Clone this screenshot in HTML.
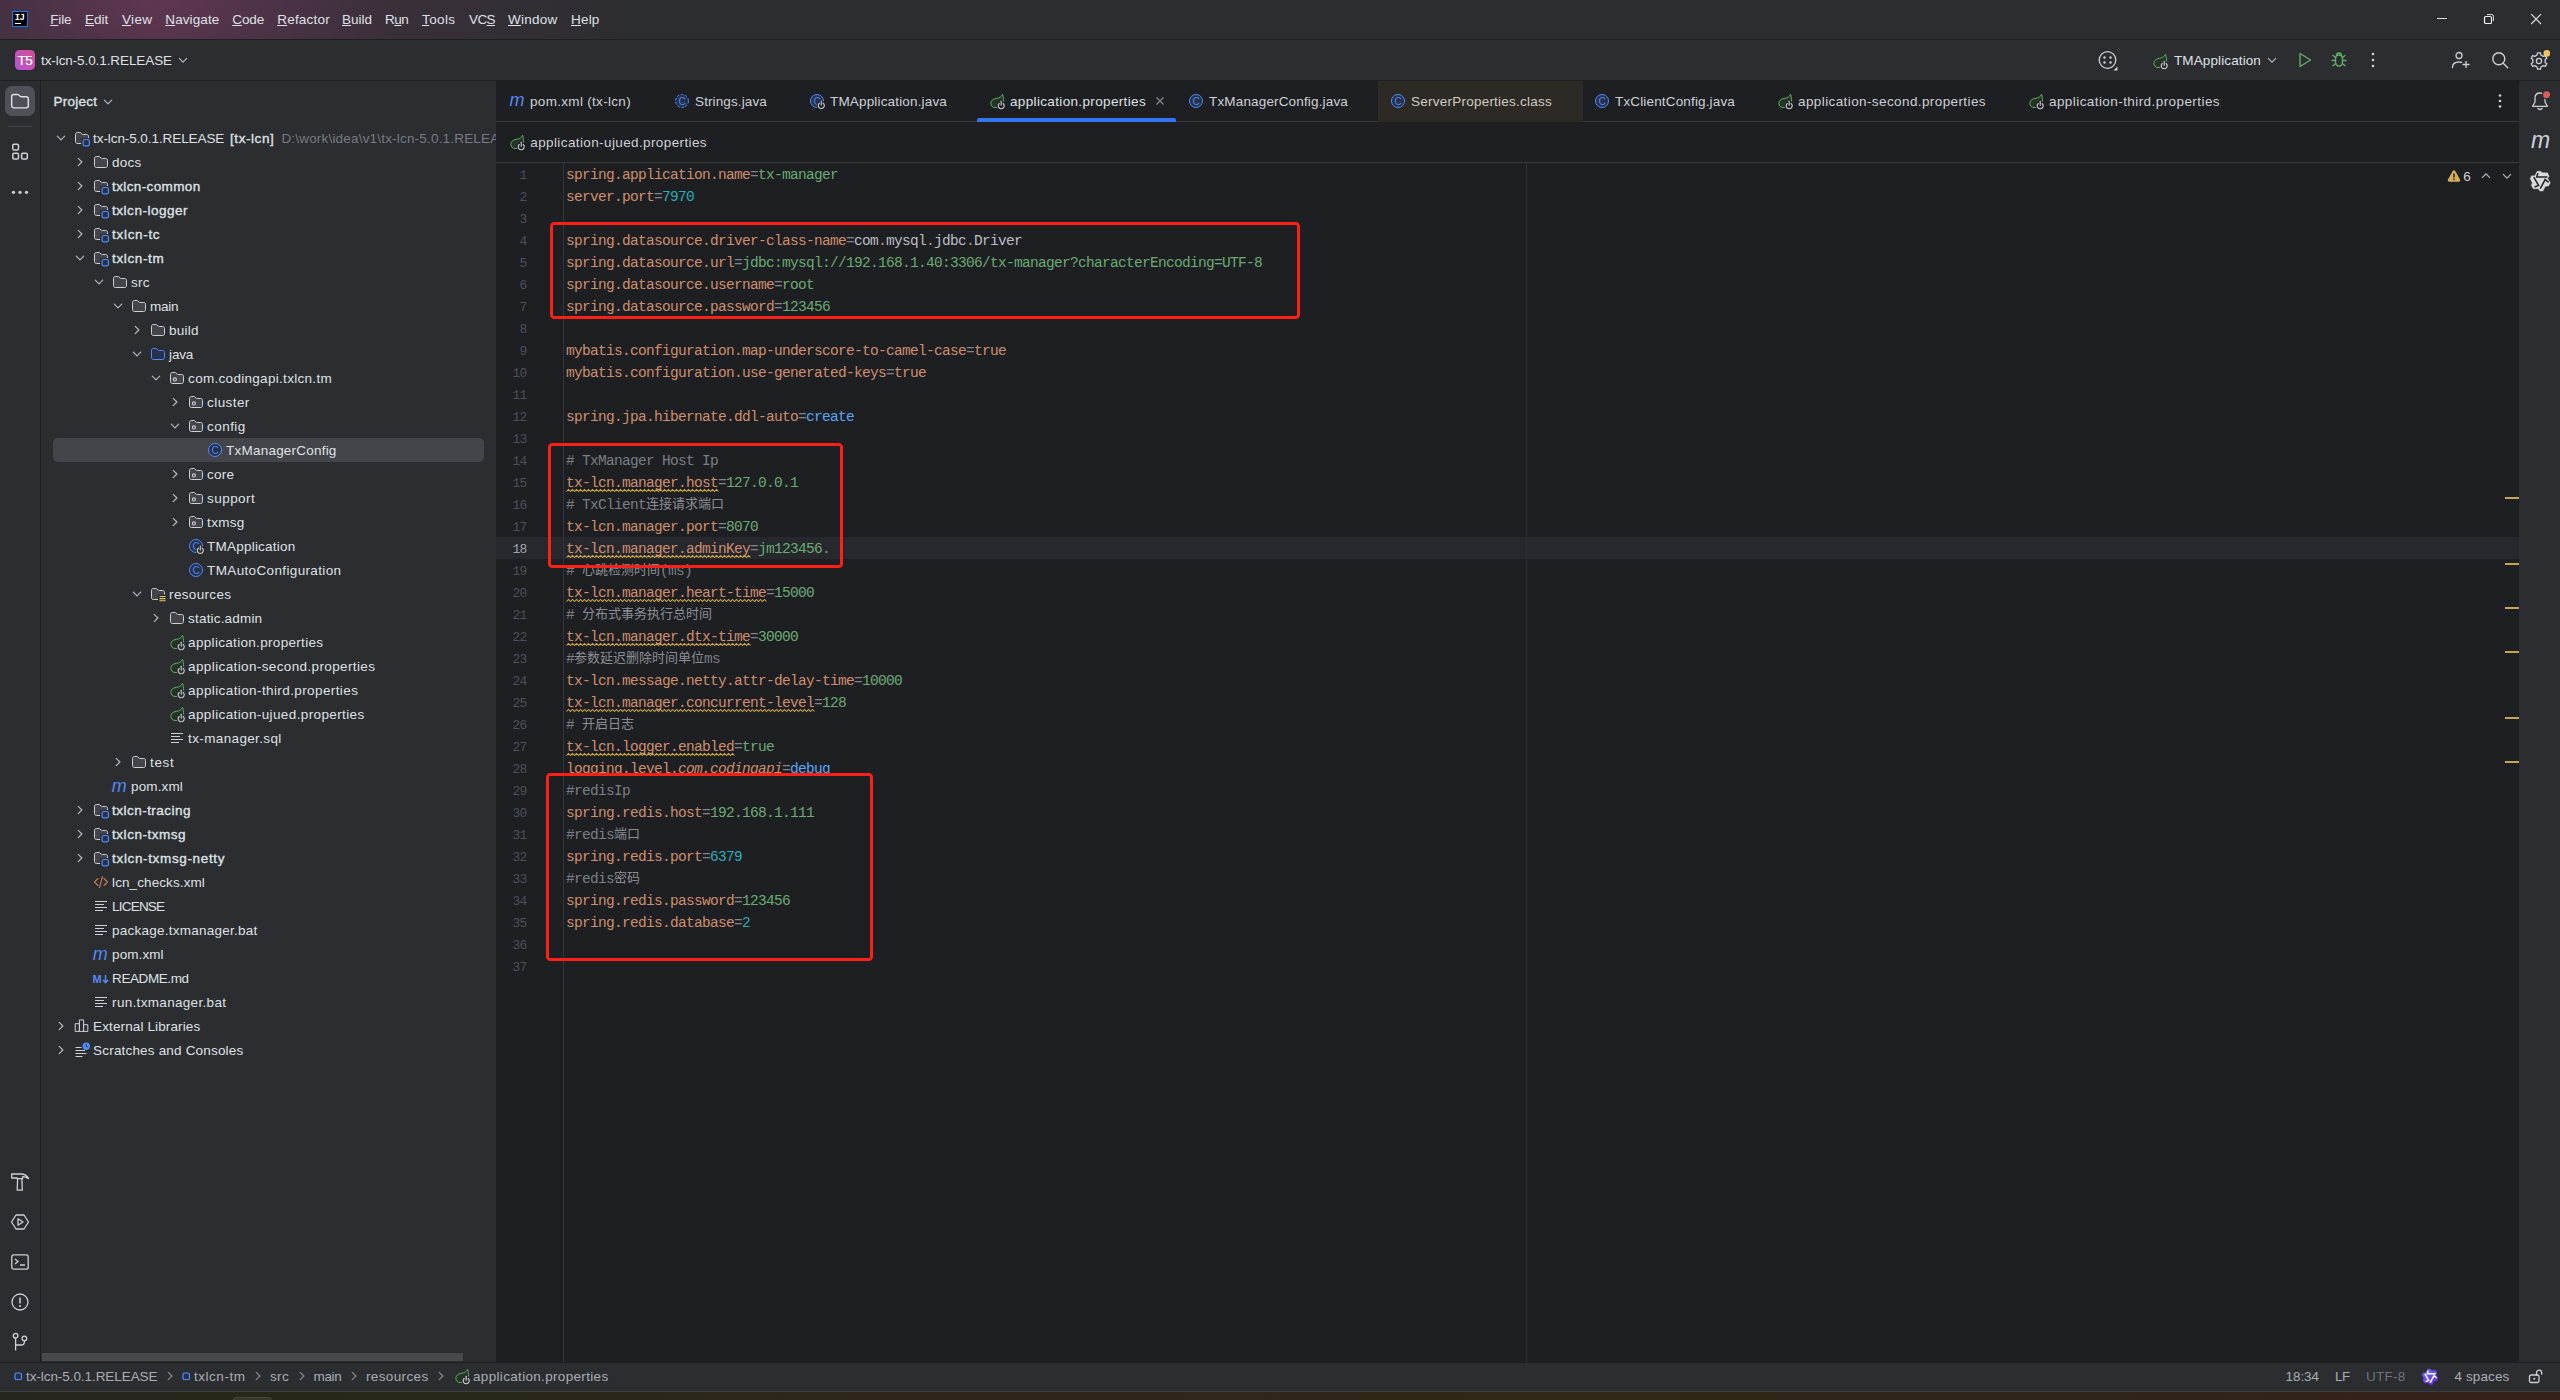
<!DOCTYPE html>
<html lang="en"><head><meta charset="utf-8"><title>tx-lcn-5.0.1.RELEASE – application.properties</title>
<style>
html,body{margin:0;padding:0;background:#2b2d30;}
body{width:2560px;height:1400px;overflow:hidden;}
#app{position:relative;width:2560px;height:1400px;overflow:hidden;background:#2b2d30;font-family:'Liberation Sans','Noto Sans CJK SC',sans-serif;}
#app>div,#app>svg,#app>span{position:absolute;}
.t{line-height:20px;white-space:pre;}
.code{position:absolute;left:566px;height:22px;line-height:22px;white-space:pre;font-family:'Liberation Mono','Noto Sans CJK SC',monospace;font-size:14.5px;letter-spacing:-0.702px;color:#bcbec4;}
.code i{position:relative;top:-1.2px;font-style:normal;font-family:'Liberation Mono','Noto Sans CJK SC',monospace;font-size:13px;letter-spacing:0;}
.k{color:#cf8e6d}.e{color:#81858c}.v{color:#6aab73}.n{color:#2aacb8}.b{color:#56a8f5}.c{color:#7a7e85}.c i{color:#8b8e95}.w{color:#bcbec4}
.ln{position:absolute;left:497px;width:29.8px;text-align:right;height:22px;line-height:23.4px;font-family:'Liberation Mono',monospace;font-size:13px;letter-spacing:-0.6px;color:#4b5059;}

</style></head><body><div id="app">
<div style="left:0px;top:0px;width:1100px;height:39px;background:radial-gradient(ellipse 520px 340px at 158px -4px,rgba(96,54,83,1) 0%,rgba(96,54,83,.5) 30%,rgba(96,54,83,.28) 45%,rgba(96,54,83,.05) 86%,rgba(96,54,83,0) 100%);"></div>
<div style="left:0px;top:39px;width:2560px;height:1px;background:#1e1f22;"></div>
<div style="left:0px;top:80px;width:2560px;height:1px;background:#1e1f22;"></div>
<div style="left:40px;top:81px;width:1px;height:1281px;background:#1e1f22;"></div>
<div style="left:496px;top:81px;width:2023px;height:1281px;background:#1e1f22;"></div>
<div style="left:496px;top:121px;width:2023px;height:1px;background:#393b40;"></div>
<div style="left:496px;top:162px;width:2023px;height:1px;background:#393b40;"></div>
<div style="left:496px;top:537px;width:2023px;height:22px;background:#26282e;"></div>
<div style="left:563px;top:163px;width:1px;height:1199px;background:#313438;"></div>
<div style="left:1526px;top:163px;width:1px;height:1199px;background:#2f3135;"></div>
<div style="left:0px;top:1362px;width:2560px;height:1px;background:#1e1f22;"></div>
<div style="left:0px;top:1392px;width:2560px;height:8px;background:linear-gradient(90deg,#25271a 0%,#2a2719 25%,#30251a 40%,#2f2718 62%,#30241a 86%,#36201a 100%);"></div>
<div style="left:0px;top:1391px;width:2560px;height:1px;background:#3c3e41;"></div>
<div style="left:233px;top:1397px;width:39px;height:6px;background:#37372a;border-radius:3px 3px 0 0;border:1px solid #45463a;box-sizing:border-box;"></div>
<div style="left:42px;top:1353px;width:421px;height:8px;background:#47494d;"></div>
<div style="left:12px;top:11px;width:16px;height:16px;background:#000;box-sizing:border-box;border:1.3px solid #0c7dfa;"></div>
<div style="left:15px;top:22.5px;width:6px;height:1.2px;background:#fff;"></div>
<div style="left:2437px;top:18px;width:10px;height:1px;background:#dfe1e5;"></div>
<svg style="left:2482px;top:12px;" width="14" height="14" viewBox="0 0 14 14" fill="none"><rect x="2.500" y="4.500" width="7" height="7" rx="1.300" stroke="#f0f1f3" stroke-width="1.200"/><path d="M5 2.600h4.800a1.600 1.600 0 0 1 1.600 1.600V9" stroke="#dfe1e5"/></svg>
<svg style="left:2529px;top:11px;" width="16" height="16" viewBox="0 0 16 16" fill="none"><path d="M2.200 3.200l9.800 9.800M12 3.200l-9.800 9.800" stroke="#dfe1e5" stroke-width="1.100"/></svg>
<div style="left:15px;top:50px;width:20px;height:20px;background:linear-gradient(45deg,#b456d8 0%,#c851ae 60%,#cf4f8e 100%);border-radius:4.5px;"></div>
<svg style="left:178px;top:55px;" width="10" height="10" viewBox="0 0 10 10" fill="none"><path d="M1 3.2l4 4 4-4" stroke="#b4b8bf" stroke-width="1.2"/></svg>
<div style="left:5px;top:86px;width:30px;height:30px;background:#4e5157;border-radius:7px;"></div>
<svg style="left:9px;top:90px;" width="22" height="22" viewBox="0 0 22 22" fill="none"><path transform="translate(-.1 .9) scale(1.11 1.03)" d="M2.500 5.500c0-1.100.9-2 2-2h3.200c.5 0 1 .2 1.400.600l1 1c.4.400.9.600 1.400.600h4c1.100 0 2 .9 2 2v6.800c0 1.100-.9 2-2 2h-11c-1.100 0-2-.9-2-2z" stroke="#dfe1e5" stroke-width="1.300"/></svg>
<div style="left:8px;top:126px;width:24px;height:1px;background:#43454a;"></div>
<svg style="left:10px;top:142px;" width="20" height="20" viewBox="0 0 20 20" fill="none"><rect x="2.800" y="2.300" width="5.700" height="5.700" rx="1.300" stroke="#ced0d6" stroke-width="1.500"/><rect x="2.800" y="11.300" width="5.700" height="5.700" rx="1.300" stroke="#ced0d6" stroke-width="1.500"/><rect x="11.600" y="11.300" width="5.700" height="5.700" rx="1.300" stroke="#ced0d6" stroke-width="1.500"/></svg>
<svg style="left:10px;top:182px;" width="20" height="20" viewBox="0 0 20 20" fill="none"><circle cx="3.500" cy="10.300" r="1.600" fill="#ced0d6"/><circle cx="10" cy="10.300" r="1.600" fill="#ced0d6"/><circle cx="16.500" cy="10.300" r="1.600" fill="#ced0d6"/></svg>
<svg style="left:102px;top:96.5px;" width="12" height="10" viewBox="0 0 12 10" fill="none"><path d="M2.300 3.200l3.700 3.700 3.700-3.700" stroke="#b4b8bf" stroke-width="1.2" stroke-linecap="round" stroke-linejoin="round"/></svg>
<div style="left:53px;top:438px;width:431px;height:24px;background:#43454a;border-radius:5px;"></div>
<svg style="left:55px;top:133px;" width="12" height="10" viewBox="0 0 12 10" fill="none"><path d="M2.300 3.200l3.700 3.700 3.700-3.700" stroke="#b4b8bf" stroke-width="1.2" stroke-linecap="round" stroke-linejoin="round"/></svg>
<svg style="left:74.2px;top:130px;overflow:visible;" width="16" height="16" viewBox="0 0 16 16" fill="none"><path d="M1.5 4.3c0-1 .8-1.8 1.8-1.8h2.6c.4 0 .7.1 1 .4l1.3 1.2c.3.3.6.4 1 .4h3.5c1 0 1.8.8 1.8 1.8v5.4c0 1-.8 1.8-1.8 1.8H3.3c-1 0-1.8-.8-1.8-1.8z" fill="#43454a" stroke="#ced0d6"/><rect x="7" y="8" width="10" height="9" fill="#2b2d30"/><rect x="9.1" y="9.5" width="6.3" height="6.3" rx="1.6" fill="#25324d" stroke="#548af7" stroke-width="1.2"/></svg>
<svg style="left:75px;top:156px;" width="10" height="12" viewBox="0 0 10 12" fill="none"><path d="M3.2 2.300l3.700 3.700-3.700 3.700" stroke="#b4b8bf" stroke-width="1.2" stroke-linecap="round" stroke-linejoin="round"/></svg>
<svg style="left:93.2px;top:154px;overflow:visible;" width="16" height="16" viewBox="0 0 16 16" fill="none"><path d="M1.5 4.3c0-1 .8-1.8 1.8-1.8h2.6c.4 0 .7.1 1 .4l1.3 1.2c.3.3.6.4 1 .4h3.5c1 0 1.8.8 1.8 1.8v5.4c0 1-.8 1.8-1.8 1.8H3.3c-1 0-1.8-.8-1.8-1.8z" fill="#43454a" stroke="#ced0d6"/></svg>
<svg style="left:75px;top:180px;" width="10" height="12" viewBox="0 0 10 12" fill="none"><path d="M3.2 2.300l3.700 3.700-3.700 3.700" stroke="#b4b8bf" stroke-width="1.2" stroke-linecap="round" stroke-linejoin="round"/></svg>
<svg style="left:93.2px;top:178px;overflow:visible;" width="16" height="16" viewBox="0 0 16 16" fill="none"><path d="M1.5 4.3c0-1 .8-1.8 1.8-1.8h2.6c.4 0 .7.1 1 .4l1.3 1.2c.3.3.6.4 1 .4h3.5c1 0 1.8.8 1.8 1.8v5.4c0 1-.8 1.8-1.8 1.8H3.3c-1 0-1.8-.8-1.8-1.8z" fill="#43454a" stroke="#ced0d6"/><rect x="7" y="8" width="10" height="9" fill="#2b2d30"/><rect x="9.1" y="9.5" width="6.3" height="6.3" rx="1.6" fill="#25324d" stroke="#548af7" stroke-width="1.2"/></svg>
<svg style="left:75px;top:204px;" width="10" height="12" viewBox="0 0 10 12" fill="none"><path d="M3.2 2.300l3.700 3.700-3.700 3.700" stroke="#b4b8bf" stroke-width="1.2" stroke-linecap="round" stroke-linejoin="round"/></svg>
<svg style="left:93.2px;top:202px;overflow:visible;" width="16" height="16" viewBox="0 0 16 16" fill="none"><path d="M1.5 4.3c0-1 .8-1.8 1.8-1.8h2.6c.4 0 .7.1 1 .4l1.3 1.2c.3.3.6.4 1 .4h3.5c1 0 1.8.8 1.8 1.8v5.4c0 1-.8 1.8-1.8 1.8H3.3c-1 0-1.8-.8-1.8-1.8z" fill="#43454a" stroke="#ced0d6"/><rect x="7" y="8" width="10" height="9" fill="#2b2d30"/><rect x="9.1" y="9.5" width="6.3" height="6.3" rx="1.6" fill="#25324d" stroke="#548af7" stroke-width="1.2"/></svg>
<svg style="left:75px;top:228px;" width="10" height="12" viewBox="0 0 10 12" fill="none"><path d="M3.2 2.300l3.700 3.700-3.700 3.700" stroke="#b4b8bf" stroke-width="1.2" stroke-linecap="round" stroke-linejoin="round"/></svg>
<svg style="left:93.2px;top:226px;overflow:visible;" width="16" height="16" viewBox="0 0 16 16" fill="none"><path d="M1.5 4.3c0-1 .8-1.8 1.8-1.8h2.6c.4 0 .7.1 1 .4l1.3 1.2c.3.3.6.4 1 .4h3.5c1 0 1.8.8 1.8 1.8v5.4c0 1-.8 1.8-1.8 1.8H3.3c-1 0-1.8-.8-1.8-1.8z" fill="#43454a" stroke="#ced0d6"/><rect x="7" y="8" width="10" height="9" fill="#2b2d30"/><rect x="9.1" y="9.5" width="6.3" height="6.3" rx="1.6" fill="#25324d" stroke="#548af7" stroke-width="1.2"/></svg>
<svg style="left:74px;top:253px;" width="12" height="10" viewBox="0 0 12 10" fill="none"><path d="M2.300 3.200l3.700 3.700 3.700-3.700" stroke="#b4b8bf" stroke-width="1.2" stroke-linecap="round" stroke-linejoin="round"/></svg>
<svg style="left:93.2px;top:250px;overflow:visible;" width="16" height="16" viewBox="0 0 16 16" fill="none"><path d="M1.5 4.3c0-1 .8-1.8 1.8-1.8h2.6c.4 0 .7.1 1 .4l1.3 1.2c.3.3.6.4 1 .4h3.5c1 0 1.8.8 1.8 1.8v5.4c0 1-.8 1.8-1.8 1.8H3.3c-1 0-1.8-.8-1.8-1.8z" fill="#43454a" stroke="#ced0d6"/><rect x="7" y="8" width="10" height="9" fill="#2b2d30"/><rect x="9.1" y="9.5" width="6.3" height="6.3" rx="1.6" fill="#25324d" stroke="#548af7" stroke-width="1.2"/></svg>
<svg style="left:93px;top:277px;" width="12" height="10" viewBox="0 0 12 10" fill="none"><path d="M2.300 3.200l3.700 3.700 3.700-3.700" stroke="#b4b8bf" stroke-width="1.2" stroke-linecap="round" stroke-linejoin="round"/></svg>
<svg style="left:112.2px;top:274px;overflow:visible;" width="16" height="16" viewBox="0 0 16 16" fill="none"><path d="M1.5 4.3c0-1 .8-1.8 1.8-1.8h2.6c.4 0 .7.1 1 .4l1.3 1.2c.3.3.6.4 1 .4h3.5c1 0 1.8.8 1.8 1.8v5.4c0 1-.8 1.8-1.8 1.8H3.3c-1 0-1.8-.8-1.8-1.8z" fill="#43454a" stroke="#ced0d6"/></svg>
<svg style="left:112px;top:301px;" width="12" height="10" viewBox="0 0 12 10" fill="none"><path d="M2.300 3.200l3.700 3.700 3.700-3.700" stroke="#b4b8bf" stroke-width="1.2" stroke-linecap="round" stroke-linejoin="round"/></svg>
<svg style="left:131.2px;top:298px;overflow:visible;" width="16" height="16" viewBox="0 0 16 16" fill="none"><path d="M1.5 4.3c0-1 .8-1.8 1.8-1.8h2.6c.4 0 .7.1 1 .4l1.3 1.2c.3.3.6.4 1 .4h3.5c1 0 1.8.8 1.8 1.8v5.4c0 1-.8 1.8-1.8 1.8H3.3c-1 0-1.8-.8-1.8-1.8z" fill="#43454a" stroke="#ced0d6"/></svg>
<svg style="left:132px;top:324px;" width="10" height="12" viewBox="0 0 10 12" fill="none"><path d="M3.2 2.300l3.700 3.700-3.700 3.700" stroke="#b4b8bf" stroke-width="1.2" stroke-linecap="round" stroke-linejoin="round"/></svg>
<svg style="left:150.2px;top:322px;overflow:visible;" width="16" height="16" viewBox="0 0 16 16" fill="none"><path d="M1.5 4.3c0-1 .8-1.8 1.8-1.8h2.6c.4 0 .7.1 1 .4l1.3 1.2c.3.3.6.4 1 .4h3.5c1 0 1.8.8 1.8 1.8v5.4c0 1-.8 1.8-1.8 1.8H3.3c-1 0-1.8-.8-1.8-1.8z" fill="#43454a" stroke="#ced0d6"/></svg>
<svg style="left:131px;top:349px;" width="12" height="10" viewBox="0 0 12 10" fill="none"><path d="M2.300 3.200l3.700 3.700 3.700-3.700" stroke="#b4b8bf" stroke-width="1.2" stroke-linecap="round" stroke-linejoin="round"/></svg>
<svg style="left:150.2px;top:346px;overflow:visible;" width="16" height="16" viewBox="0 0 16 16" fill="none"><path d="M1.5 4.3c0-1 .8-1.8 1.8-1.8h2.6c.4 0 .7.1 1 .4l1.3 1.2c.3.3.6.4 1 .4h3.5c1 0 1.8.8 1.8 1.8v5.4c0 1-.8 1.8-1.8 1.8H3.3c-1 0-1.8-.8-1.8-1.8z" fill="#25324d" stroke="#548af7"/></svg>
<svg style="left:150px;top:373px;" width="12" height="10" viewBox="0 0 12 10" fill="none"><path d="M2.300 3.200l3.700 3.700 3.700-3.700" stroke="#b4b8bf" stroke-width="1.2" stroke-linecap="round" stroke-linejoin="round"/></svg>
<svg style="left:169.2px;top:370px;overflow:visible;" width="16" height="16" viewBox="0 0 16 16" fill="none"><path d="M1.5 4.3c0-1 .8-1.8 1.8-1.8h2.6c.4 0 .7.1 1 .4l1.3 1.2c.3.3.6.4 1 .4h3.5c1 0 1.8.8 1.8 1.8v5.4c0 1-.8 1.8-1.8 1.8H3.3c-1 0-1.8-.8-1.8-1.8z" fill="#43454a" stroke="#ced0d6"/><circle cx="5.9" cy="9.4" r="1.55" stroke="#ced0d6" stroke-width="1.1"/></svg>
<svg style="left:170px;top:396px;" width="10" height="12" viewBox="0 0 10 12" fill="none"><path d="M3.2 2.300l3.700 3.700-3.700 3.700" stroke="#b4b8bf" stroke-width="1.2" stroke-linecap="round" stroke-linejoin="round"/></svg>
<svg style="left:188.2px;top:394px;overflow:visible;" width="16" height="16" viewBox="0 0 16 16" fill="none"><path d="M1.5 4.3c0-1 .8-1.8 1.8-1.8h2.6c.4 0 .7.1 1 .4l1.3 1.2c.3.3.6.4 1 .4h3.5c1 0 1.8.8 1.8 1.8v5.4c0 1-.8 1.8-1.8 1.8H3.3c-1 0-1.8-.8-1.8-1.8z" fill="#43454a" stroke="#ced0d6"/><circle cx="5.9" cy="9.4" r="1.55" stroke="#ced0d6" stroke-width="1.1"/></svg>
<svg style="left:169px;top:421px;" width="12" height="10" viewBox="0 0 12 10" fill="none"><path d="M2.300 3.200l3.700 3.700 3.700-3.700" stroke="#b4b8bf" stroke-width="1.2" stroke-linecap="round" stroke-linejoin="round"/></svg>
<svg style="left:188.2px;top:418px;overflow:visible;" width="16" height="16" viewBox="0 0 16 16" fill="none"><path d="M1.5 4.3c0-1 .8-1.8 1.8-1.8h2.6c.4 0 .7.1 1 .4l1.3 1.2c.3.3.6.4 1 .4h3.5c1 0 1.8.8 1.8 1.8v5.4c0 1-.8 1.8-1.8 1.8H3.3c-1 0-1.8-.8-1.8-1.8z" fill="#43454a" stroke="#ced0d6"/><circle cx="5.9" cy="9.4" r="1.55" stroke="#ced0d6" stroke-width="1.1"/></svg>
<svg style="left:207.2px;top:442px;overflow:visible;" width="16" height="16" viewBox="0 0 16 16" fill="none"><circle cx="8" cy="8" r="6.5" fill="#25324d" stroke="#548af7"/><text x="8.1" y="11.5" text-anchor="middle" font-family="Liberation Sans,sans-serif" font-size="10" fill="#5088f2">C</text></svg>
<svg style="left:170px;top:468px;" width="10" height="12" viewBox="0 0 10 12" fill="none"><path d="M3.2 2.300l3.700 3.700-3.700 3.700" stroke="#b4b8bf" stroke-width="1.2" stroke-linecap="round" stroke-linejoin="round"/></svg>
<svg style="left:188.2px;top:466px;overflow:visible;" width="16" height="16" viewBox="0 0 16 16" fill="none"><path d="M1.5 4.3c0-1 .8-1.8 1.8-1.8h2.6c.4 0 .7.1 1 .4l1.3 1.2c.3.3.6.4 1 .4h3.5c1 0 1.8.8 1.8 1.8v5.4c0 1-.8 1.8-1.8 1.8H3.3c-1 0-1.8-.8-1.8-1.8z" fill="#43454a" stroke="#ced0d6"/><circle cx="5.9" cy="9.4" r="1.55" stroke="#ced0d6" stroke-width="1.1"/></svg>
<svg style="left:170px;top:492px;" width="10" height="12" viewBox="0 0 10 12" fill="none"><path d="M3.2 2.300l3.700 3.700-3.700 3.700" stroke="#b4b8bf" stroke-width="1.2" stroke-linecap="round" stroke-linejoin="round"/></svg>
<svg style="left:188.2px;top:490px;overflow:visible;" width="16" height="16" viewBox="0 0 16 16" fill="none"><path d="M1.5 4.3c0-1 .8-1.8 1.8-1.8h2.6c.4 0 .7.1 1 .4l1.3 1.2c.3.3.6.4 1 .4h3.5c1 0 1.8.8 1.8 1.8v5.4c0 1-.8 1.8-1.8 1.8H3.3c-1 0-1.8-.8-1.8-1.8z" fill="#43454a" stroke="#ced0d6"/><circle cx="5.9" cy="9.4" r="1.55" stroke="#ced0d6" stroke-width="1.1"/></svg>
<svg style="left:170px;top:516px;" width="10" height="12" viewBox="0 0 10 12" fill="none"><path d="M3.2 2.300l3.700 3.700-3.700 3.700" stroke="#b4b8bf" stroke-width="1.2" stroke-linecap="round" stroke-linejoin="round"/></svg>
<svg style="left:188.2px;top:514px;overflow:visible;" width="16" height="16" viewBox="0 0 16 16" fill="none"><path d="M1.5 4.3c0-1 .8-1.8 1.8-1.8h2.6c.4 0 .7.1 1 .4l1.3 1.2c.3.3.6.4 1 .4h3.5c1 0 1.8.8 1.8 1.8v5.4c0 1-.8 1.8-1.8 1.8H3.3c-1 0-1.8-.8-1.8-1.8z" fill="#43454a" stroke="#ced0d6"/><circle cx="5.9" cy="9.4" r="1.55" stroke="#ced0d6" stroke-width="1.1"/></svg>
<svg style="left:188.2px;top:538px;overflow:visible;" width="16" height="16" viewBox="0 0 16 16" fill="none"><circle cx="8" cy="8" r="6.5" fill="#25324d" stroke="#548af7"/><text x="8.1" y="11.5" text-anchor="middle" font-family="Liberation Sans,sans-serif" font-size="10" fill="#5088f2">C</text><circle cx="12.3" cy="12.4" r="4.6" fill="#2b2d30"/><path d="M10.4 10.2a3 3 0 1 0 3.8 0" stroke="#ced0d6" stroke-width="1.1" stroke-linecap="round"/><path d="M12.3 8.0v4" stroke="#ced0d6" stroke-width="1.1" stroke-linecap="round"/></svg>
<svg style="left:188.2px;top:562px;overflow:visible;" width="16" height="16" viewBox="0 0 16 16" fill="none"><circle cx="8" cy="8" r="6.5" fill="#25324d" stroke="#548af7"/><text x="8.1" y="11.5" text-anchor="middle" font-family="Liberation Sans,sans-serif" font-size="10" fill="#5088f2">C</text></svg>
<svg style="left:131px;top:589px;" width="12" height="10" viewBox="0 0 12 10" fill="none"><path d="M2.300 3.200l3.700 3.700 3.700-3.700" stroke="#b4b8bf" stroke-width="1.2" stroke-linecap="round" stroke-linejoin="round"/></svg>
<svg style="left:150.2px;top:586px;overflow:visible;" width="16" height="16" viewBox="0 0 16 16" fill="none"><path d="M1.5 4.3c0-1 .8-1.8 1.8-1.8h2.6c.4 0 .7.1 1 .4l1.3 1.2c.3.3.6.4 1 .4h3.5c1 0 1.8.8 1.8 1.8v5.4c0 1-.8 1.8-1.8 1.8H3.3c-1 0-1.8-.8-1.8-1.8z" fill="#43454a" stroke="#ced0d6"/><rect x="8" y="8.5" width="9" height="8" fill="#2b2d30"/><path d="M9.5 10.5h6M9.5 12.6h6M9.5 14.7h6" stroke="#f2c55c" stroke-width="1.1"/></svg>
<svg style="left:151px;top:612px;" width="10" height="12" viewBox="0 0 10 12" fill="none"><path d="M3.2 2.300l3.700 3.700-3.700 3.700" stroke="#b4b8bf" stroke-width="1.2" stroke-linecap="round" stroke-linejoin="round"/></svg>
<svg style="left:169.2px;top:610px;overflow:visible;" width="16" height="16" viewBox="0 0 16 16" fill="none"><path d="M1.5 4.3c0-1 .8-1.8 1.8-1.8h2.6c.4 0 .7.1 1 .4l1.3 1.2c.3.3.6.4 1 .4h3.5c1 0 1.8.8 1.8 1.8v5.4c0 1-.8 1.8-1.8 1.8H3.3c-1 0-1.8-.8-1.8-1.8z" fill="#43454a" stroke="#ced0d6"/></svg>
<svg style="left:169.2px;top:634px;overflow:visible;" width="16" height="16" viewBox="0 0 16 16" fill="none"><path transform="translate(1.1 0) scale(.945 1)" d="M13.2 1.2C12.2 3.9 9.8 4.9 6.3 5.4 2.8 5.9.8 7.9.8 10.4c0 2.5 1.9 4.1 4.4 4.1H9c3 0 5.3-2.5 5.3-6 0-3-.5-5.3-1.1-7.300z" fill="#253627" stroke="#5fad65" stroke-linejoin="round"/><circle cx="12.2" cy="12.7" r="4.6" fill="#2b2d30"/><path d="M10.299999999999999 10.5a3 3 0 1 0 3.8 0" stroke="#ced0d6" stroke-width="1.1" stroke-linecap="round"/><path d="M12.2 8.299999999999999v4" stroke="#ced0d6" stroke-width="1.1" stroke-linecap="round"/></svg>
<svg style="left:169.2px;top:658px;overflow:visible;" width="16" height="16" viewBox="0 0 16 16" fill="none"><path transform="translate(1.1 0) scale(.945 1)" d="M13.2 1.2C12.2 3.9 9.8 4.9 6.3 5.4 2.8 5.9.8 7.9.8 10.4c0 2.5 1.9 4.1 4.4 4.1H9c3 0 5.3-2.5 5.3-6 0-3-.5-5.3-1.1-7.300z" fill="#253627" stroke="#5fad65" stroke-linejoin="round"/><circle cx="12.2" cy="12.7" r="4.6" fill="#2b2d30"/><path d="M10.299999999999999 10.5a3 3 0 1 0 3.8 0" stroke="#ced0d6" stroke-width="1.1" stroke-linecap="round"/><path d="M12.2 8.299999999999999v4" stroke="#ced0d6" stroke-width="1.1" stroke-linecap="round"/></svg>
<svg style="left:169.2px;top:682px;overflow:visible;" width="16" height="16" viewBox="0 0 16 16" fill="none"><path transform="translate(1.1 0) scale(.945 1)" d="M13.2 1.2C12.2 3.9 9.8 4.9 6.3 5.4 2.8 5.9.8 7.9.8 10.4c0 2.5 1.9 4.1 4.4 4.1H9c3 0 5.3-2.5 5.3-6 0-3-.5-5.3-1.1-7.300z" fill="#253627" stroke="#5fad65" stroke-linejoin="round"/><circle cx="12.2" cy="12.7" r="4.6" fill="#2b2d30"/><path d="M10.299999999999999 10.5a3 3 0 1 0 3.8 0" stroke="#ced0d6" stroke-width="1.1" stroke-linecap="round"/><path d="M12.2 8.299999999999999v4" stroke="#ced0d6" stroke-width="1.1" stroke-linecap="round"/></svg>
<svg style="left:169.2px;top:706px;overflow:visible;" width="16" height="16" viewBox="0 0 16 16" fill="none"><path transform="translate(1.1 0) scale(.945 1)" d="M13.2 1.2C12.2 3.9 9.8 4.9 6.3 5.4 2.8 5.9.8 7.9.8 10.4c0 2.5 1.9 4.1 4.4 4.1H9c3 0 5.3-2.5 5.3-6 0-3-.5-5.3-1.1-7.300z" fill="#253627" stroke="#5fad65" stroke-linejoin="round"/><circle cx="12.2" cy="12.7" r="4.6" fill="#2b2d30"/><path d="M10.299999999999999 10.5a3 3 0 1 0 3.8 0" stroke="#ced0d6" stroke-width="1.1" stroke-linecap="round"/><path d="M12.2 8.299999999999999v4" stroke="#ced0d6" stroke-width="1.1" stroke-linecap="round"/></svg>
<svg style="left:169.2px;top:730px;overflow:visible;" width="16" height="16" viewBox="0 0 16 16" fill="none"><path d="M2 3.5h12M2 6.5h9M2 9.5h12M2 12.5h8" stroke="#ced0d6" stroke-width="1.1"/></svg>
<svg style="left:113px;top:756px;" width="10" height="12" viewBox="0 0 10 12" fill="none"><path d="M3.2 2.300l3.700 3.700-3.700 3.700" stroke="#b4b8bf" stroke-width="1.2" stroke-linecap="round" stroke-linejoin="round"/></svg>
<svg style="left:131.2px;top:754px;overflow:visible;" width="16" height="16" viewBox="0 0 16 16" fill="none"><path d="M1.5 4.3c0-1 .8-1.8 1.8-1.8h2.6c.4 0 .7.1 1 .4l1.3 1.2c.3.3.6.4 1 .4h3.5c1 0 1.8.8 1.8 1.8v5.4c0 1-.8 1.8-1.8 1.8H3.3c-1 0-1.8-.8-1.8-1.8z" fill="#43454a" stroke="#ced0d6"/></svg>
<svg style="left:75px;top:804px;" width="10" height="12" viewBox="0 0 10 12" fill="none"><path d="M3.2 2.300l3.700 3.700-3.700 3.700" stroke="#b4b8bf" stroke-width="1.2" stroke-linecap="round" stroke-linejoin="round"/></svg>
<svg style="left:93.2px;top:802px;overflow:visible;" width="16" height="16" viewBox="0 0 16 16" fill="none"><path d="M1.5 4.3c0-1 .8-1.8 1.8-1.8h2.6c.4 0 .7.1 1 .4l1.3 1.2c.3.3.6.4 1 .4h3.5c1 0 1.8.8 1.8 1.8v5.4c0 1-.8 1.8-1.8 1.8H3.3c-1 0-1.8-.8-1.8-1.8z" fill="#43454a" stroke="#ced0d6"/><rect x="7" y="8" width="10" height="9" fill="#2b2d30"/><rect x="9.1" y="9.5" width="6.3" height="6.3" rx="1.6" fill="#25324d" stroke="#548af7" stroke-width="1.2"/></svg>
<svg style="left:75px;top:828px;" width="10" height="12" viewBox="0 0 10 12" fill="none"><path d="M3.2 2.300l3.700 3.700-3.700 3.700" stroke="#b4b8bf" stroke-width="1.2" stroke-linecap="round" stroke-linejoin="round"/></svg>
<svg style="left:93.2px;top:826px;overflow:visible;" width="16" height="16" viewBox="0 0 16 16" fill="none"><path d="M1.5 4.3c0-1 .8-1.8 1.8-1.8h2.6c.4 0 .7.1 1 .4l1.3 1.2c.3.3.6.4 1 .4h3.5c1 0 1.8.8 1.8 1.8v5.4c0 1-.8 1.8-1.8 1.8H3.3c-1 0-1.8-.8-1.8-1.8z" fill="#43454a" stroke="#ced0d6"/><rect x="7" y="8" width="10" height="9" fill="#2b2d30"/><rect x="9.1" y="9.5" width="6.3" height="6.3" rx="1.6" fill="#25324d" stroke="#548af7" stroke-width="1.2"/></svg>
<svg style="left:75px;top:852px;" width="10" height="12" viewBox="0 0 10 12" fill="none"><path d="M3.2 2.300l3.700 3.700-3.700 3.700" stroke="#b4b8bf" stroke-width="1.2" stroke-linecap="round" stroke-linejoin="round"/></svg>
<svg style="left:93.2px;top:850px;overflow:visible;" width="16" height="16" viewBox="0 0 16 16" fill="none"><path d="M1.5 4.3c0-1 .8-1.8 1.8-1.8h2.6c.4 0 .7.1 1 .4l1.3 1.2c.3.3.6.4 1 .4h3.5c1 0 1.8.8 1.8 1.8v5.4c0 1-.8 1.8-1.8 1.8H3.3c-1 0-1.8-.8-1.8-1.8z" fill="#43454a" stroke="#ced0d6"/><rect x="7" y="8" width="10" height="9" fill="#2b2d30"/><rect x="9.1" y="9.5" width="6.3" height="6.3" rx="1.6" fill="#25324d" stroke="#548af7" stroke-width="1.2"/></svg>
<svg style="left:93.2px;top:874px;overflow:visible;" width="16" height="16" viewBox="0 0 16 16" fill="none"><path d="M5 4.5L1.5 8 5 11.5M11 4.5L14.500 8 11 11.5M9.5 2.5l-3 11" stroke="#c77d55" stroke-width="1.1" stroke-linecap="round" stroke-linejoin="round"/></svg>
<svg style="left:93.2px;top:898px;overflow:visible;" width="16" height="16" viewBox="0 0 16 16" fill="none"><path d="M2 3.5h12M2 6.5h9M2 9.5h12M2 12.5h8" stroke="#ced0d6" stroke-width="1.1"/></svg>
<svg style="left:93.2px;top:922px;overflow:visible;" width="16" height="16" viewBox="0 0 16 16" fill="none"><path d="M2 3.5h12M2 6.5h9M2 9.5h12M2 12.5h8" stroke="#ced0d6" stroke-width="1.1"/></svg>
<svg style="left:102.0px;top:973.5px;" width="7" height="10" viewBox="0 0 7 10" fill="none"><path d="M3.500 1v7.500M.9 6L3.500 8.600 6.100 6" stroke="#548af7" stroke-width="1.500"/></svg>
<svg style="left:93.2px;top:994px;overflow:visible;" width="16" height="16" viewBox="0 0 16 16" fill="none"><path d="M2 3.5h12M2 6.5h9M2 9.5h12M2 12.5h8" stroke="#ced0d6" stroke-width="1.1"/></svg>
<svg style="left:56px;top:1020px;" width="10" height="12" viewBox="0 0 10 12" fill="none"><path d="M3.2 2.300l3.700 3.700-3.700 3.700" stroke="#b4b8bf" stroke-width="1.2" stroke-linecap="round" stroke-linejoin="round"/></svg>
<svg style="left:74.2px;top:1018px;overflow:visible;" width="16" height="16" viewBox="0 0 16 16" fill="none"><path d="M1.200 5.700h4.200v7.700H1.200zM5.400 1.900h4.200v11.500H5.400zM9.600 6.700h4.200v6.700H9.600z" stroke="#ced0d6" stroke-linejoin="round"/></svg>
<svg style="left:56px;top:1044px;" width="10" height="12" viewBox="0 0 10 12" fill="none"><path d="M3.2 2.300l3.700 3.700-3.700 3.700" stroke="#b4b8bf" stroke-width="1.2" stroke-linecap="round" stroke-linejoin="round"/></svg>
<svg style="left:74.2px;top:1042px;overflow:visible;" width="16" height="16" viewBox="0 0 16 16" fill="none"><path d="M1.500 5.500h6M1.500 8.500h9.500M1.500 11.500h11M1.500 14.500h7" stroke="#ced0d6" stroke-width="1.100"/><circle cx="12.300" cy="4.200" r="3.700" fill="#548af7"/><path d="M12.300 2.300v2.100l1.300.9" stroke="#2b2d30" stroke-width="1"/></svg>
<div style="left:281.4px;top:129px;width:214.6px;height:20px;overflow:hidden;"><span style="position:absolute;left:0;top:0;line-height:20px;white-space:pre;font-size:13.5px;color:#777b83;letter-spacing:0.19px;">D:\work\idea\v1\tx-lcn-5.0.1.RELEASE</span></div>
<div style="left:1378px;top:81px;width:205px;height:41px;background:#2d2a25;"></div>
<div style="left:977px;top:118px;width:199px;height:4px;background:#3574f0;border-radius:2px 2px 0 0;"></div>
<svg style="left:674px;top:93px;overflow:visible;" width="16" height="16" viewBox="0 0 16 16" fill="none"><circle cx="8" cy="8" r="6.500" fill="#25324d" stroke="#548af7" stroke-dasharray="2.600 1.480"/><text x="8.1" y="11.5" text-anchor="middle" font-family="Liberation Sans,sans-serif" font-size="10" fill="#5088f2">C</text></svg>
<svg style="left:809px;top:93px;overflow:visible;" width="16" height="16" viewBox="0 0 16 16" fill="none"><circle cx="8" cy="8" r="6.5" fill="#25324d" stroke="#548af7"/><text x="8.1" y="11.5" text-anchor="middle" font-family="Liberation Sans,sans-serif" font-size="10" fill="#5088f2">C</text><circle cx="12.3" cy="12.4" r="4.6" fill="#1e1f22"/><path d="M10.4 10.2a3 3 0 1 0 3.8 0" stroke="#ced0d6" stroke-width="1.1" stroke-linecap="round"/><path d="M12.3 8.0v4" stroke="#ced0d6" stroke-width="1.1" stroke-linecap="round"/></svg>
<svg style="left:988.5px;top:93px;overflow:visible;" width="16" height="16" viewBox="0 0 16 16" fill="none"><path transform="translate(1.1 0) scale(.945 1)" d="M13.2 1.2C12.2 3.9 9.8 4.9 6.3 5.4 2.8 5.9.8 7.9.8 10.4c0 2.5 1.9 4.1 4.4 4.1H9c3 0 5.3-2.5 5.3-6 0-3-.5-5.3-1.1-7.300z" fill="#253627" stroke="#5fad65" stroke-linejoin="round"/><circle cx="12.2" cy="12.7" r="4.6" fill="#1e1f22"/><path d="M10.299999999999999 10.5a3 3 0 1 0 3.8 0" stroke="#ced0d6" stroke-width="1.1" stroke-linecap="round"/><path d="M12.2 8.299999999999999v4" stroke="#ced0d6" stroke-width="1.1" stroke-linecap="round"/></svg>
<svg style="left:1188px;top:93px;overflow:visible;" width="16" height="16" viewBox="0 0 16 16" fill="none"><circle cx="8" cy="8" r="6.5" fill="#25324d" stroke="#548af7"/><text x="8.1" y="11.5" text-anchor="middle" font-family="Liberation Sans,sans-serif" font-size="10" fill="#5088f2">C</text></svg>
<svg style="left:1390px;top:93px;overflow:visible;" width="16" height="16" viewBox="0 0 16 16" fill="none"><circle cx="8" cy="8" r="6.5" fill="#25324d" stroke="#548af7"/><text x="8.1" y="11.5" text-anchor="middle" font-family="Liberation Sans,sans-serif" font-size="10" fill="#5088f2">C</text></svg>
<svg style="left:1594px;top:93px;overflow:visible;" width="16" height="16" viewBox="0 0 16 16" fill="none"><circle cx="8" cy="8" r="6.5" fill="#25324d" stroke="#548af7"/><text x="8.1" y="11.5" text-anchor="middle" font-family="Liberation Sans,sans-serif" font-size="10" fill="#5088f2">C</text></svg>
<svg style="left:1777px;top:93px;overflow:visible;" width="16" height="16" viewBox="0 0 16 16" fill="none"><path transform="translate(1.1 0) scale(.945 1)" d="M13.2 1.2C12.2 3.9 9.8 4.9 6.3 5.4 2.8 5.9.8 7.9.8 10.4c0 2.5 1.9 4.1 4.4 4.1H9c3 0 5.3-2.5 5.3-6 0-3-.5-5.3-1.1-7.300z" fill="#253627" stroke="#5fad65" stroke-linejoin="round"/><circle cx="12.2" cy="12.7" r="4.6" fill="#1e1f22"/><path d="M10.299999999999999 10.5a3 3 0 1 0 3.8 0" stroke="#ced0d6" stroke-width="1.1" stroke-linecap="round"/><path d="M12.2 8.299999999999999v4" stroke="#ced0d6" stroke-width="1.1" stroke-linecap="round"/></svg>
<svg style="left:2028px;top:93px;overflow:visible;" width="16" height="16" viewBox="0 0 16 16" fill="none"><path transform="translate(1.1 0) scale(.945 1)" d="M13.2 1.2C12.2 3.9 9.8 4.9 6.3 5.4 2.8 5.9.8 7.9.8 10.4c0 2.5 1.9 4.1 4.4 4.1H9c3 0 5.3-2.5 5.3-6 0-3-.5-5.3-1.1-7.300z" fill="#253627" stroke="#5fad65" stroke-linejoin="round"/><circle cx="12.2" cy="12.7" r="4.6" fill="#1e1f22"/><path d="M10.299999999999999 10.5a3 3 0 1 0 3.8 0" stroke="#ced0d6" stroke-width="1.1" stroke-linecap="round"/><path d="M12.2 8.299999999999999v4" stroke="#ced0d6" stroke-width="1.1" stroke-linecap="round"/></svg>
<svg style="left:1155px;top:96px;" width="10" height="10" viewBox="0 0 10 10" fill="none"><path d="M1.500 1.500l7 7M8.500 1.500l-7 7" stroke="#868a91" stroke-width="1.100"/></svg>
<svg style="left:2495px;top:91px;" width="10" height="20" viewBox="0 0 10 20" fill="none"><circle cx="5" cy="4.500" r="1.300" fill="#ced0d6"/><circle cx="5" cy="10" r="1.300" fill="#ced0d6"/><circle cx="5" cy="15.500" r="1.300" fill="#ced0d6"/></svg>
<svg style="left:508.6px;top:134px;overflow:visible;" width="16" height="16" viewBox="0 0 16 16" fill="none"><path transform="translate(1.1 0) scale(.945 1)" d="M13.2 1.2C12.2 3.9 9.8 4.9 6.3 5.4 2.8 5.9.8 7.9.8 10.4c0 2.5 1.9 4.1 4.4 4.1H9c3 0 5.3-2.5 5.3-6 0-3-.5-5.3-1.1-7.300z" fill="#253627" stroke="#5fad65" stroke-linejoin="round"/><circle cx="12.2" cy="12.7" r="4.6" fill="#1e1f22"/><path d="M10.299999999999999 10.5a3 3 0 1 0 3.8 0" stroke="#ced0d6" stroke-width="1.1" stroke-linecap="round"/><path d="M12.2 8.299999999999999v4" stroke="#ced0d6" stroke-width="1.1" stroke-linecap="round"/></svg>
<svg style="left:2447px;top:169px;" width="14" height="13" viewBox="0 0 14 13" fill="none"><path d="M7 1.200c.5 0 1 .3 1.300.800l4.700 8.400c.6 1-.1 2.300-1.300 2.300H2.300c-1.200 0-1.900-1.300-1.300-2.300l4.700-8.400c.300-.5.800-.8 1.300-.8z" fill="#d6ae58"/><path d="M7 4.500v4" stroke="#1e1f22" stroke-width="1.500"/><rect x="6.250" y="9.600" width="1.500" height="1.500" fill="#1e1f22"/></svg>
<svg style="left:2481px;top:171px;" width="10" height="10" viewBox="0 0 10 10" fill="none"><path d="M1 6.800l4-4 4 4" stroke="#b4b8bf" stroke-width="1.200"/></svg>
<svg style="left:2502px;top:171px;" width="10" height="10" viewBox="0 0 10 10" fill="none"><path d="M1 3.200l4 4 4-4" stroke="#b4b8bf" stroke-width="1.200"/></svg>
<div style="left:2505px;top:497px;width:14px;height:2px;background:#c9a64e;"></div>
<div style="left:2505px;top:563px;width:14px;height:2px;background:#c9a64e;"></div>
<div style="left:2505px;top:607px;width:14px;height:2px;background:#c9a64e;"></div>
<div style="left:2505px;top:651px;width:14px;height:2px;background:#c9a64e;"></div>
<div style="left:2505px;top:717px;width:14px;height:2px;background:#c9a64e;"></div>
<div style="left:2505px;top:761px;width:14px;height:2px;background:#c9a64e;"></div>
<svg style="left:2530px;top:91px;" width="20" height="20" viewBox="0 0 20 20" fill="none"><path d="M10 2C6.800 2 5 4.300 5 7.200V11l-2.400 4.300h14.800L15 11V7.200C15 4.300 13.200 2 10 2z" stroke="#ced0d6" stroke-width="1.300" stroke-linejoin="round"/><path d="M7.900 17.400c.5.700 1.200 1.100 2.100 1.100s1.600-.4 2.100-1.100" stroke="#ced0d6" stroke-width="1.300" stroke-linecap="round"/><circle cx="16.600" cy="3.700" r="4.700" fill="#2b2d30"/><circle cx="16.600" cy="3.700" r="3.500" fill="#db5c5c"/></svg>
<svg style="left:10px;top:1172px;" width="20" height="20" viewBox="0 0 20 20" fill="none"><path d="M1.700 2H11c3.500 0 6 1.500 7.600 4.600-2-1.300-4-1.900-6-1.900v1.900H7.200V6H1.700z" stroke="#ced0d6" stroke-width="1.300" stroke-linejoin="round"/><path d="M7.600 6.600L7.200 18.200h5.100l-.4-11.600" stroke="#ced0d6" stroke-width="1.300" stroke-linejoin="round"/></svg>
<svg style="left:10px;top:1212px;" width="20" height="20" viewBox="0 0 20 20" fill="none"><path d="M6 3h8l4.500 7-4.500 7H6L1.500 10z" stroke="#ced0d6" stroke-width="1.300" stroke-linejoin="round"/><path d="M8 6.800v6.400l5-3.200z" stroke="#ced0d6" stroke-width="1.300" stroke-linejoin="round"/></svg>
<svg style="left:10px;top:1252px;" width="20" height="20" viewBox="0 0 20 20" fill="none"><rect x="1.800" y="2.800" width="16.400" height="14.400" rx="2" stroke="#ced0d6" stroke-width="1.300"/><path d="M5 7l3 2.500L5 12M10 13h5" stroke="#ced0d6" stroke-width="1.300"/></svg>
<svg style="left:10px;top:1292px;" width="20" height="20" viewBox="0 0 20 20" fill="none"><circle cx="10" cy="10" r="8" stroke="#ced0d6" stroke-width="1.300"/><path d="M10 5.500v6" stroke="#ced0d6" stroke-width="1.500"/><circle cx="10" cy="14" r="1" fill="#ced0d6"/></svg>
<svg style="left:10px;top:1332px;" width="20" height="20" viewBox="0 0 20 20" fill="none"><circle cx="5.600" cy="3.700" r="2.300" stroke="#ced0d6" stroke-width="1.300"/><circle cx="14.400" cy="6.400" r="2.300" stroke="#ced0d6" stroke-width="1.300"/><path d="M5.600 6v12.400M14.400 8.700v1c0 2-1.300 3.300-3.300 3.300H5.600" stroke="#ced0d6" stroke-width="1.300"/></svg>
<svg style="left:2096px;top:49px;" width="24" height="24" viewBox="0 0 24 24" fill="none"><circle cx="11.500" cy="11" r="8.300" stroke="#ced0d6" stroke-width="1.300"/><circle cx="8.500" cy="8.500" r="1.200" fill="#ced0d6"/><circle cx="14.500" cy="8.500" r="1.200" fill="#ced0d6"/><circle cx="8.500" cy="13.500" r="1.200" fill="#ced0d6"/><circle cx="14.500" cy="13.500" r="1.200" fill="#ced0d6"/><path d="M21.500 17.500v4h-4z" fill="#ced0d6"/></svg>
<svg style="left:2151.5px;top:52.5px;overflow:visible;" width="16" height="16" viewBox="0 0 16 16" fill="none"><path transform="translate(1.1 0) scale(.945 1)" d="M13.2 1.2C12.2 3.9 9.8 4.9 6.3 5.4 2.8 5.9.8 7.9.8 10.4c0 2.5 1.9 4.1 4.4 4.1H9c3 0 5.3-2.5 5.3-6 0-3-.5-5.3-1.1-7.300z" fill="#253627" stroke="#5fad65" stroke-linejoin="round"/><circle cx="12.2" cy="12.7" r="4.6" fill="#2b2d30"/><path d="M10.299999999999999 10.5a3 3 0 1 0 3.8 0" stroke="#ced0d6" stroke-width="1.1" stroke-linecap="round"/><path d="M12.2 8.299999999999999v4" stroke="#ced0d6" stroke-width="1.1" stroke-linecap="round"/></svg>
<svg style="left:2266.5px;top:55px;" width="10" height="10" viewBox="0 0 10 10" fill="none"><path d="M1 3.200l4 4 4-4" stroke="#b4b8bf" stroke-width="1.200"/></svg>
<svg style="left:2295px;top:50px;" width="20" height="20" viewBox="0 0 20 20" fill="none"><path d="M5 3.500v13l10.500-6.500z" stroke="#5fad65" stroke-width="1.400" stroke-linejoin="round"/></svg>
<svg style="left:2328.7px;top:50px;" width="20" height="20" viewBox="0 0 20 20" fill="none"><g stroke="#5fad65" stroke-width="1.400" stroke-linecap="round"><path d="M6.500 8.500a3.500 3.500 0 0 1 7 0v4a3.500 3.500 0 0 1-7 0z"/><path d="M7.500 5.500a2.500 2.500 0 0 1 5 0"/><path d="M6.500 10.500H3M17 10.500h-3.500M6.700 7.500L4 5.500M13.300 7.500l2.700-2M6.800 13.500L4 15.800M13.200 13.500l2.800 2.300"/></g></svg>
<svg style="left:2368px;top:50px;" width="10" height="20" viewBox="0 0 10 20" fill="none"><circle cx="5" cy="4" r="1.300" fill="#ced0d6"/><circle cx="5" cy="10" r="1.300" fill="#ced0d6"/><circle cx="5" cy="16" r="1.300" fill="#ced0d6"/></svg>
<svg style="left:2450px;top:50px;" width="22" height="20" viewBox="0 0 22 20" fill="none"><circle cx="9" cy="5.500" r="3" stroke="#ced0d6" stroke-width="1.300"/><path d="M2.500 17.500c0-3.500 2.500-5.500 6.500-5.500 1 0 1.800.1 2.500.4" stroke="#ced0d6" stroke-width="1.300" stroke-linecap="round"/><path d="M16 11v7M12.500 14.500h7" stroke="#ced0d6" stroke-width="1.300"/></svg>
<svg style="left:2490px;top:50px;" width="20" height="20" viewBox="0 0 20 20" fill="none"><circle cx="8.800" cy="8.800" r="6" stroke="#ced0d6" stroke-width="1.400"/><path d="M13.200 13.200l4.500 4.500" stroke="#ced0d6" stroke-width="1.400" stroke-linecap="round"/></svg>
<svg style="left:2529px;top:50px;" width="22" height="22" viewBox="0 0 22 22" fill="none"><path d="M8.14 4.98L8.51 2.83L11.49 2.83L11.86 4.98L14.28 6.38L16.33 5.63L17.81 8.20L16.14 9.60L16.14 12.40L17.81 13.80L16.33 16.37L14.28 15.62L11.86 17.02L11.49 19.17L8.51 19.17L8.14 17.02L5.72 15.62L3.67 16.37L2.19 13.80L3.86 12.40L3.86 9.60L2.19 8.20L3.67 5.63L5.72 6.38z" stroke="#ced0d6" stroke-width="1.300" stroke-linejoin="round"/><circle cx="10" cy="11" r="2.600" stroke="#ced0d6" stroke-width="1.300"/><circle cx="17.800" cy="3.400" r="3.300" fill="#f2c55c"/></svg>
<svg style="left:13.5px;top:1372px;" width="9" height="9" viewBox="0 0 9 9" fill="none"><rect x="1" y="1" width="6.500" height="6.500" rx="1.600" fill="#25324d" stroke="#548af7" stroke-width="1.200"/></svg>
<svg style="left:165px;top:1370px;" width="10" height="12" viewBox="0 0 10 12" fill="none"><path d="M3.2 2.300l3.700 3.700-3.700 3.700" stroke="#868a91" stroke-width="1.2" stroke-linecap="round" stroke-linejoin="round"/></svg>
<svg style="left:181.5px;top:1372px;" width="9" height="9" viewBox="0 0 9 9" fill="none"><rect x="1" y="1" width="6.500" height="6.500" rx="1.600" fill="#25324d" stroke="#548af7" stroke-width="1.200"/></svg>
<svg style="left:253px;top:1370px;" width="10" height="12" viewBox="0 0 10 12" fill="none"><path d="M3.2 2.300l3.700 3.700-3.700 3.700" stroke="#868a91" stroke-width="1.2" stroke-linecap="round" stroke-linejoin="round"/></svg>
<svg style="left:296.5px;top:1370px;" width="10" height="12" viewBox="0 0 10 12" fill="none"><path d="M3.2 2.300l3.700 3.700-3.700 3.700" stroke="#868a91" stroke-width="1.2" stroke-linecap="round" stroke-linejoin="round"/></svg>
<svg style="left:349px;top:1370px;" width="10" height="12" viewBox="0 0 10 12" fill="none"><path d="M3.2 2.300l3.700 3.700-3.700 3.700" stroke="#868a91" stroke-width="1.2" stroke-linecap="round" stroke-linejoin="round"/></svg>
<svg style="left:436px;top:1370px;" width="10" height="12" viewBox="0 0 10 12" fill="none"><path d="M3.2 2.300l3.700 3.700-3.700 3.700" stroke="#868a91" stroke-width="1.2" stroke-linecap="round" stroke-linejoin="round"/></svg>
<svg style="left:453.5px;top:1367.5px;overflow:visible;" width="16" height="16" viewBox="0 0 16 16" fill="none"><path transform="translate(1.1 0) scale(.945 1)" d="M13.2 1.2C12.2 3.9 9.8 4.9 6.3 5.4 2.8 5.9.8 7.9.8 10.4c0 2.5 1.9 4.1 4.4 4.1H9c3 0 5.3-2.5 5.3-6 0-3-.5-5.3-1.1-7.300z" fill="#253627" stroke="#5fad65" stroke-linejoin="round"/><circle cx="12.2" cy="12.7" r="4.6" fill="#2b2d30"/><path d="M10.299999999999999 10.5a3 3 0 1 0 3.8 0" stroke="#ced0d6" stroke-width="1.1" stroke-linecap="round"/><path d="M12.2 8.299999999999999v4" stroke="#ced0d6" stroke-width="1.1" stroke-linecap="round"/></svg>
<svg style="left:2527px;top:1367px;" width="18" height="18" viewBox="0 0 18 18" fill="none"><rect x="2.500" y="8" width="9.500" height="7.500" rx="1.500" stroke="#ced0d6" stroke-width="1.300"/><path d="M9.500 8V5.800a2.600 2.600 0 0 1 5.200 0v1.400" stroke="#ced0d6" stroke-width="1.300" stroke-linecap="round"/><circle cx="7.300" cy="11.700" r="1" fill="#ced0d6"/></svg>
<div class="ln" style="top:164px;color:#4b5059">1</div>
<div class="code" style="top:164px"><span class="k">spring.application.name</span><span class="e">=</span><span class="v">tx-manager</span></div>
<div class="ln" style="top:186px;color:#4b5059">2</div>
<div class="code" style="top:186px"><span class="k">server.port</span><span class="e">=</span><span class="n">7970</span></div>
<div class="ln" style="top:208px;color:#4b5059">3</div>
<div class="ln" style="top:230px;color:#4b5059">4</div>
<div class="code" style="top:230px"><span class="k">spring.datasource.driver-class-name</span><span class="e">=</span><span class="w">com</span><span class="k">.</span><span class="w">mysql</span><span class="k">.</span><span class="w">jdbc</span><span class="k">.</span><span class="w">Driver</span></div>
<div class="ln" style="top:252px;color:#4b5059">5</div>
<div class="code" style="top:252px"><span class="k">spring.datasource.url</span><span class="e">=</span><span class="v">jdbc:mysql://192.168.1.40:3306/tx-manager?characterEncoding=UTF-8</span></div>
<div class="ln" style="top:274px;color:#4b5059">6</div>
<div class="code" style="top:274px"><span class="k">spring.datasource.username</span><span class="e">=</span><span class="v">root</span></div>
<div class="ln" style="top:296px;color:#4b5059">7</div>
<div class="code" style="top:296px"><span class="k">spring.datasource.password</span><span class="e">=</span><span class="v">123456</span></div>
<div class="ln" style="top:318px;color:#4b5059">8</div>
<div class="ln" style="top:340px;color:#4b5059">9</div>
<div class="code" style="top:340px"><span class="k">mybatis.configuration.map-underscore-to-camel-case</span><span class="e">=</span><span class="k">true</span></div>
<div class="ln" style="top:362px;color:#4b5059">10</div>
<div class="code" style="top:362px"><span class="k">mybatis.configuration.use-generated-keys</span><span class="e">=</span><span class="k">true</span></div>
<div class="ln" style="top:384px;color:#4b5059">11</div>
<div class="ln" style="top:406px;color:#4b5059">12</div>
<div class="code" style="top:406px"><span class="k">spring.jpa.hibernate.ddl-auto</span><span class="e">=</span><span class="b">create</span></div>
<div class="ln" style="top:428px;color:#4b5059">13</div>
<div class="ln" style="top:450px;color:#4b5059">14</div>
<div class="code" style="top:450px"><span class="c"># TxManager Host Ip</span></div>
<div class="ln" style="top:472px;color:#4b5059">15</div>
<div class="code" style="top:472px"><span class="k">tx-lcn.manager.host</span><span class="e">=</span><span class="v">127.0.0.1</span></div>
<svg style="left:566px;top:489px;" width="154" height="4" viewBox="0 0 154 4" fill="none"><polyline points="0.5,2.5 2.5,0.5 4.5,2.5 6.5,0.5 8.5,2.5 10.5,0.5 12.5,2.5 14.5,0.5 16.5,2.5 18.5,0.5 20.5,2.5 22.5,0.5 24.5,2.5 26.5,0.5 28.5,2.5 30.5,0.5 32.5,2.5 34.5,0.5 36.5,2.5 38.5,0.5 40.5,2.5 42.5,0.5 44.5,2.5 46.5,0.5 48.5,2.5 50.5,0.5 52.5,2.5 54.5,0.5 56.5,2.5 58.5,0.5 60.5,2.5 62.5,0.5 64.5,2.5 66.5,0.5 68.5,2.5 70.5,0.5 72.5,2.5 74.5,0.5 76.5,2.5 78.5,0.5 80.5,2.5 82.5,0.5 84.5,2.5 86.5,0.5 88.5,2.5 90.5,0.5 92.5,2.5 94.5,0.5 96.5,2.5 98.5,0.5 100.5,2.5 102.5,0.5 104.5,2.5 106.5,0.5 108.5,2.5 110.5,0.5 112.5,2.5 114.5,0.5 116.5,2.5 118.5,0.5 120.5,2.5 122.5,0.5 124.5,2.5 126.5,0.5 128.5,2.5 130.5,0.5 132.5,2.5 134.5,0.5 136.5,2.5 138.5,0.5 140.5,2.5 142.5,0.5 144.5,2.5 146.5,0.5 148.5,2.5 150.5,0.5 152.5,2.5" stroke="#d2ab48" stroke-width="1.05"/></svg>
<div class="ln" style="top:494px;color:#4b5059">16</div>
<div class="code" style="top:494px"><span class="c"># TxClient<i>连接请求端口</i></span></div>
<div class="ln" style="top:516px;color:#4b5059">17</div>
<div class="code" style="top:516px"><span class="k">tx-lcn.manager.port</span><span class="e">=</span><span class="v">8070</span></div>
<div class="ln" style="top:538px;color:#a1a3ab">18</div>
<div class="code" style="top:538px"><span class="k">tx-lcn.manager.adminKey</span><span class="e">=</span><span class="v">jm123456.</span></div>
<svg style="left:566px;top:555px;" width="186" height="4" viewBox="0 0 186 4" fill="none"><polyline points="0.5,2.5 2.5,0.5 4.5,2.5 6.5,0.5 8.5,2.5 10.5,0.5 12.5,2.5 14.5,0.5 16.5,2.5 18.5,0.5 20.5,2.5 22.5,0.5 24.5,2.5 26.5,0.5 28.5,2.5 30.5,0.5 32.5,2.5 34.5,0.5 36.5,2.5 38.5,0.5 40.5,2.5 42.5,0.5 44.5,2.5 46.5,0.5 48.5,2.5 50.5,0.5 52.5,2.5 54.5,0.5 56.5,2.5 58.5,0.5 60.5,2.5 62.5,0.5 64.5,2.5 66.5,0.5 68.5,2.5 70.5,0.5 72.5,2.5 74.5,0.5 76.5,2.5 78.5,0.5 80.5,2.5 82.5,0.5 84.5,2.5 86.5,0.5 88.5,2.5 90.5,0.5 92.5,2.5 94.5,0.5 96.5,2.5 98.5,0.5 100.5,2.5 102.5,0.5 104.5,2.5 106.5,0.5 108.5,2.5 110.5,0.5 112.5,2.5 114.5,0.5 116.5,2.5 118.5,0.5 120.5,2.5 122.5,0.5 124.5,2.5 126.5,0.5 128.5,2.5 130.5,0.5 132.5,2.5 134.5,0.5 136.5,2.5 138.5,0.5 140.5,2.5 142.5,0.5 144.5,2.5 146.5,0.5 148.5,2.5 150.5,0.5 152.5,2.5 154.5,0.5 156.5,2.5 158.5,0.5 160.5,2.5 162.5,0.5 164.5,2.5 166.5,0.5 168.5,2.5 170.5,0.5 172.5,2.5 174.5,0.5 176.5,2.5 178.5,0.5 180.5,2.5 182.5,0.5 184.5,2.5" stroke="#d2ab48" stroke-width="1.05"/></svg>
<div class="ln" style="top:560px;color:#4b5059">19</div>
<div class="code" style="top:560px"><span class="c"># <i>心跳检测时间</i>(ms)</span></div>
<div class="ln" style="top:582px;color:#4b5059">20</div>
<div class="code" style="top:582px"><span class="k">tx-lcn.manager.heart-time</span><span class="e">=</span><span class="v">15000</span></div>
<svg style="left:566px;top:599px;" width="202" height="4" viewBox="0 0 202 4" fill="none"><polyline points="0.5,2.5 2.5,0.5 4.5,2.5 6.5,0.5 8.5,2.5 10.5,0.5 12.5,2.5 14.5,0.5 16.5,2.5 18.5,0.5 20.5,2.5 22.5,0.5 24.5,2.5 26.5,0.5 28.5,2.5 30.5,0.5 32.5,2.5 34.5,0.5 36.5,2.5 38.5,0.5 40.5,2.5 42.5,0.5 44.5,2.5 46.5,0.5 48.5,2.5 50.5,0.5 52.5,2.5 54.5,0.5 56.5,2.5 58.5,0.5 60.5,2.5 62.5,0.5 64.5,2.5 66.5,0.5 68.5,2.5 70.5,0.5 72.5,2.5 74.5,0.5 76.5,2.5 78.5,0.5 80.5,2.5 82.5,0.5 84.5,2.5 86.5,0.5 88.5,2.5 90.5,0.5 92.5,2.5 94.5,0.5 96.5,2.5 98.5,0.5 100.5,2.5 102.5,0.5 104.5,2.5 106.5,0.5 108.5,2.5 110.5,0.5 112.5,2.5 114.5,0.5 116.5,2.5 118.5,0.5 120.5,2.5 122.5,0.5 124.5,2.5 126.5,0.5 128.5,2.5 130.5,0.5 132.5,2.5 134.5,0.5 136.5,2.5 138.5,0.5 140.5,2.5 142.5,0.5 144.5,2.5 146.5,0.5 148.5,2.5 150.5,0.5 152.5,2.5 154.5,0.5 156.5,2.5 158.5,0.5 160.5,2.5 162.5,0.5 164.5,2.5 166.5,0.5 168.5,2.5 170.5,0.5 172.5,2.5 174.5,0.5 176.5,2.5 178.5,0.5 180.5,2.5 182.5,0.5 184.5,2.5 186.5,0.5 188.5,2.5 190.5,0.5 192.5,2.5 194.5,0.5 196.5,2.5 198.5,0.5 200.5,2.5" stroke="#d2ab48" stroke-width="1.05"/></svg>
<div class="ln" style="top:604px;color:#4b5059">21</div>
<div class="code" style="top:604px"><span class="c"># <i>分布式事务执行总时间</i></span></div>
<div class="ln" style="top:626px;color:#4b5059">22</div>
<div class="code" style="top:626px"><span class="k">tx-lcn.manager.dtx-time</span><span class="e">=</span><span class="v">30000</span></div>
<svg style="left:566px;top:643px;" width="186" height="4" viewBox="0 0 186 4" fill="none"><polyline points="0.5,2.5 2.5,0.5 4.5,2.5 6.5,0.5 8.5,2.5 10.5,0.5 12.5,2.5 14.5,0.5 16.5,2.5 18.5,0.5 20.5,2.5 22.5,0.5 24.5,2.5 26.5,0.5 28.5,2.5 30.5,0.5 32.5,2.5 34.5,0.5 36.5,2.5 38.5,0.5 40.5,2.5 42.5,0.5 44.5,2.5 46.5,0.5 48.5,2.5 50.5,0.5 52.5,2.5 54.5,0.5 56.5,2.5 58.5,0.5 60.5,2.5 62.5,0.5 64.5,2.5 66.5,0.5 68.5,2.5 70.5,0.5 72.5,2.5 74.5,0.5 76.5,2.5 78.5,0.5 80.5,2.5 82.5,0.5 84.5,2.5 86.5,0.5 88.5,2.5 90.5,0.5 92.5,2.5 94.5,0.5 96.5,2.5 98.5,0.5 100.5,2.5 102.5,0.5 104.5,2.5 106.5,0.5 108.5,2.5 110.5,0.5 112.5,2.5 114.5,0.5 116.5,2.5 118.5,0.5 120.5,2.5 122.5,0.5 124.5,2.5 126.5,0.5 128.5,2.5 130.5,0.5 132.5,2.5 134.5,0.5 136.5,2.5 138.5,0.5 140.5,2.5 142.5,0.5 144.5,2.5 146.5,0.5 148.5,2.5 150.5,0.5 152.5,2.5 154.5,0.5 156.5,2.5 158.5,0.5 160.5,2.5 162.5,0.5 164.5,2.5 166.5,0.5 168.5,2.5 170.5,0.5 172.5,2.5 174.5,0.5 176.5,2.5 178.5,0.5 180.5,2.5 182.5,0.5 184.5,2.5" stroke="#d2ab48" stroke-width="1.05"/></svg>
<div class="ln" style="top:648px;color:#4b5059">23</div>
<div class="code" style="top:648px"><span class="c">#<i>参数延迟删除时间单位</i>ms</span></div>
<div class="ln" style="top:670px;color:#4b5059">24</div>
<div class="code" style="top:670px"><span class="k">tx-lcn.message.netty.attr-delay-time</span><span class="e">=</span><span class="v">10000</span></div>
<div class="ln" style="top:692px;color:#4b5059">25</div>
<div class="code" style="top:692px"><span class="k">tx-lcn.manager.concurrent-level</span><span class="e">=</span><span class="v">128</span></div>
<svg style="left:566px;top:709px;" width="250" height="4" viewBox="0 0 250 4" fill="none"><polyline points="0.5,2.5 2.5,0.5 4.5,2.5 6.5,0.5 8.5,2.5 10.5,0.5 12.5,2.5 14.5,0.5 16.5,2.5 18.5,0.5 20.5,2.5 22.5,0.5 24.5,2.5 26.5,0.5 28.5,2.5 30.5,0.5 32.5,2.5 34.5,0.5 36.5,2.5 38.5,0.5 40.5,2.5 42.5,0.5 44.5,2.5 46.5,0.5 48.5,2.5 50.5,0.5 52.5,2.5 54.5,0.5 56.5,2.5 58.5,0.5 60.5,2.5 62.5,0.5 64.5,2.5 66.5,0.5 68.5,2.5 70.5,0.5 72.5,2.5 74.5,0.5 76.5,2.5 78.5,0.5 80.5,2.5 82.5,0.5 84.5,2.5 86.5,0.5 88.5,2.5 90.5,0.5 92.5,2.5 94.5,0.5 96.5,2.5 98.5,0.5 100.5,2.5 102.5,0.5 104.5,2.5 106.5,0.5 108.5,2.5 110.5,0.5 112.5,2.5 114.5,0.5 116.5,2.5 118.5,0.5 120.5,2.5 122.5,0.5 124.5,2.5 126.5,0.5 128.5,2.5 130.5,0.5 132.5,2.5 134.5,0.5 136.5,2.5 138.5,0.5 140.5,2.5 142.5,0.5 144.5,2.5 146.5,0.5 148.5,2.5 150.5,0.5 152.5,2.5 154.5,0.5 156.5,2.5 158.5,0.5 160.5,2.5 162.5,0.5 164.5,2.5 166.5,0.5 168.5,2.5 170.5,0.5 172.5,2.5 174.5,0.5 176.5,2.5 178.5,0.5 180.5,2.5 182.5,0.5 184.5,2.5 186.5,0.5 188.5,2.5 190.5,0.5 192.5,2.5 194.5,0.5 196.5,2.5 198.5,0.5 200.5,2.5 202.5,0.5 204.5,2.5 206.5,0.5 208.5,2.5 210.5,0.5 212.5,2.5 214.5,0.5 216.5,2.5 218.5,0.5 220.5,2.5 222.5,0.5 224.5,2.5 226.5,0.5 228.5,2.5 230.5,0.5 232.5,2.5 234.5,0.5 236.5,2.5 238.5,0.5 240.5,2.5 242.5,0.5 244.5,2.5 246.5,0.5 248.5,2.5" stroke="#d2ab48" stroke-width="1.05"/></svg>
<div class="ln" style="top:714px;color:#4b5059">26</div>
<div class="code" style="top:714px"><span class="c"># <i>开启日志</i></span></div>
<div class="ln" style="top:736px;color:#4b5059">27</div>
<div class="code" style="top:736px"><span class="k">tx-lcn.logger.enabled</span><span class="e">=</span><span class="v">true</span></div>
<svg style="left:566px;top:753px;" width="170" height="4" viewBox="0 0 170 4" fill="none"><polyline points="0.5,2.5 2.5,0.5 4.5,2.5 6.5,0.5 8.5,2.5 10.5,0.5 12.5,2.5 14.5,0.5 16.5,2.5 18.5,0.5 20.5,2.5 22.5,0.5 24.5,2.5 26.5,0.5 28.5,2.5 30.5,0.5 32.5,2.5 34.5,0.5 36.5,2.5 38.5,0.5 40.5,2.5 42.5,0.5 44.5,2.5 46.5,0.5 48.5,2.5 50.5,0.5 52.5,2.5 54.5,0.5 56.5,2.5 58.5,0.5 60.5,2.5 62.5,0.5 64.5,2.5 66.5,0.5 68.5,2.5 70.5,0.5 72.5,2.5 74.5,0.5 76.5,2.5 78.5,0.5 80.5,2.5 82.5,0.5 84.5,2.5 86.5,0.5 88.5,2.5 90.5,0.5 92.5,2.5 94.5,0.5 96.5,2.5 98.5,0.5 100.5,2.5 102.5,0.5 104.5,2.5 106.5,0.5 108.5,2.5 110.5,0.5 112.5,2.5 114.5,0.5 116.5,2.5 118.5,0.5 120.5,2.5 122.5,0.5 124.5,2.5 126.5,0.5 128.5,2.5 130.5,0.5 132.5,2.5 134.5,0.5 136.5,2.5 138.5,0.5 140.5,2.5 142.5,0.5 144.5,2.5 146.5,0.5 148.5,2.5 150.5,0.5 152.5,2.5 154.5,0.5 156.5,2.5 158.5,0.5 160.5,2.5 162.5,0.5 164.5,2.5 166.5,0.5 168.5,2.5" stroke="#d2ab48" stroke-width="1.05"/></svg>
<div class="ln" style="top:758px;color:#4b5059">28</div>
<div class="code" style="top:758px"><span class="k">logging.level.</span><span class="k" style="font-style:italic">com.codingapi</span><span class="e">=</span><span class="b">debug</span></div>
<div class="ln" style="top:780px;color:#4b5059">29</div>
<div class="code" style="top:780px"><span class="c">#redisIp</span></div>
<div class="ln" style="top:802px;color:#4b5059">30</div>
<div class="code" style="top:802px"><span class="k">spring.redis.host</span><span class="e">=</span><span class="v">192.168.1.111</span></div>
<div class="ln" style="top:824px;color:#4b5059">31</div>
<div class="code" style="top:824px"><span class="c">#redis<i>端口</i></span></div>
<div class="ln" style="top:846px;color:#4b5059">32</div>
<div class="code" style="top:846px"><span class="k">spring.redis.port</span><span class="e">=</span><span class="n">6379</span></div>
<div class="ln" style="top:868px;color:#4b5059">33</div>
<div class="code" style="top:868px"><span class="c">#redis<i>密码</i></span></div>
<div class="ln" style="top:890px;color:#4b5059">34</div>
<div class="code" style="top:890px"><span class="k">spring.redis.password</span><span class="e">=</span><span class="v">123456</span></div>
<div class="ln" style="top:912px;color:#4b5059">35</div>
<div class="code" style="top:912px"><span class="k">spring.redis.database</span><span class="e">=</span><span class="n">2</span></div>
<div class="ln" style="top:934px;color:#4b5059">36</div>
<div class="ln" style="top:956px;color:#4b5059">37</div>
<div style="left:550.1px;top:222.2px;width:750.1px;height:96.80000000000001px;background:transparent;box-sizing:border-box;border:3.8px solid #fd2015;border-radius:4.3px;"></div>
<div style="left:548.2px;top:443.4px;width:295.0px;height:124.60000000000002px;background:transparent;box-sizing:border-box;border:3.8px solid #fd2015;border-radius:4.3px;"></div>
<div style="left:546.3px;top:773.4px;width:326.9000000000001px;height:187.60000000000002px;background:transparent;box-sizing:border-box;border:3.8px solid #fd2015;border-radius:4.3px;"></div>
<svg style="left:2528.8px;top:169.9px" width="22.3" height="22.3" fill="none"><defs></defs><path d="M8.15 1.23L11.86 1.23L13.01 2.80L18.44 2.80L20.16 6.23L18.73 8.52L21.30 12.81L19.58 15.95L16.44 16.24L13.87 21.10L10.72 21.10L9.58 18.81L4.43 18.81L2.29 15.38L3.29 12.81L1.14 8.52L2.72 5.80L5.86 5.66z" fill="#d9dadd" stroke="#d9dadd" stroke-width="0.4" stroke-linejoin="round"/><path d="M8.86 3.09L7.72 7.09L18.44 7.09" stroke="#232529" stroke-width="1.55" stroke-linejoin="miter"/><path d="M4.72 7.09L9.58 15.38L5.57 16.95" stroke="#232529" stroke-width="1.55" stroke-linejoin="miter"/><path d="M11.29 18.53L16.15 9.52L19.58 12.38" stroke="#232529" stroke-width="1.55" stroke-linejoin="miter"/></svg>
<svg style="left:2421px;top:1367.9px" width="18" height="18" fill="none"><defs><linearGradient id="tyg" x1="0" y1="0" x2="0.6" y2="1"><stop offset="0" stop-color="#6f6af8"/><stop offset="1" stop-color="#6a2ff0"/></linearGradient></defs><path d="M6.63 1.18L9.56 1.18L10.46 2.42L14.75 2.42L16.10 5.12L14.97 6.93L17.00 10.31L15.65 12.79L13.17 13.01L11.14 16.84L8.66 16.84L7.76 15.04L3.70 15.04L2.01 12.34L2.80 10.31L1.11 6.93L2.35 4.79L4.83 4.67z" fill="url(#tyg)" stroke="url(#tyg)" stroke-width="0.4" stroke-linejoin="round"/><path d="M7.20 2.65L6.30 5.80L14.75 5.80" stroke="#ffffff" stroke-width="1.45" stroke-linejoin="miter"/><path d="M3.93 5.80L7.76 12.34L4.61 13.57" stroke="#ffffff" stroke-width="1.45" stroke-linejoin="miter"/><path d="M9.11 14.81L12.94 7.72L15.65 9.97" stroke="#ffffff" stroke-width="1.45" stroke-linejoin="miter"/></svg>
<span class="t" style="left:14.70px;top:8.00px;font-size:9px;color:#fff;font-weight:bold;letter-spacing:-0.500px;font-family:'Liberation Mono',monospace;">IJ</span>
<span class="t" style="left:50.30px;top:10.00px;font-size:13.5px;color:#dfe1e5;letter-spacing:-0.191px;"><u>F</u>ile</span>
<span class="t" style="left:85.00px;top:10.00px;font-size:13.5px;color:#dfe1e5;letter-spacing:0.009px;"><u>E</u>dit</span>
<span class="t" style="left:122.00px;top:10.00px;font-size:13.5px;color:#dfe1e5;letter-spacing:0.317px;"><u>V</u>iew</span>
<span class="t" style="left:165.30px;top:10.00px;font-size:13.5px;color:#dfe1e5;letter-spacing:0.100px;"><u>N</u>avigate</span>
<span class="t" style="left:232.20px;top:10.00px;font-size:13.5px;color:#dfe1e5;letter-spacing:-0.045px;"><u>C</u>ode</span>
<span class="t" style="left:277.20px;top:10.00px;font-size:13.5px;color:#dfe1e5;letter-spacing:0.221px;"><u>R</u>efactor</span>
<span class="t" style="left:342.00px;top:10.00px;font-size:13.5px;color:#dfe1e5;letter-spacing:-0.006px;"><u>B</u>uild</span>
<span class="t" style="left:385.00px;top:10.00px;font-size:13.5px;color:#dfe1e5;letter-spacing:-0.455px;">R<u>u</u>n</span>
<span class="t" style="left:422.00px;top:10.00px;font-size:13.5px;color:#dfe1e5;letter-spacing:0.397px;"><u>T</u>ools</span>
<span class="t" style="left:469.00px;top:10.00px;font-size:13.5px;color:#dfe1e5;letter-spacing:-0.589px;">VC<u>S</u></span>
<span class="t" style="left:508.00px;top:10.00px;font-size:13.5px;color:#dfe1e5;letter-spacing:0.247px;"><u>W</u>indow</span>
<span class="t" style="left:571.00px;top:10.00px;font-size:13.5px;color:#dfe1e5;letter-spacing:0.184px;"><u>H</u>elp</span>
<span class="t" style="left:17.60px;top:51.00px;font-size:13.5px;color:#fff;letter-spacing:-0.683px;text-shadow:0 0 .4px #fff;">T5</span>
<span class="t" style="left:41.00px;top:51.00px;font-size:13.5px;color:#dfe1e5;letter-spacing:-0.091px;">tx-lcn-5.0.1.RELEASE</span>
<span class="t" style="left:53.40px;top:92.00px;font-size:13.5px;color:#dfe1e5;-webkit-text-stroke:0.36px;letter-spacing:0.253px;">Project</span>
<span class="t" style="left:93.10px;top:129.00px;font-size:13.5px;color:#dfe1e5;letter-spacing:-0.081px;">tx-lcn-5.0.1.RELEASE</span>
<span class="t" style="left:112.10px;top:153.00px;font-size:13.5px;color:#dfe1e5;letter-spacing:0.192px;">docs</span>
<span class="t" style="left:112.10px;top:177.00px;font-size:13.5px;color:#dfe1e5;-webkit-text-stroke:0.36px;letter-spacing:0.372px;">txlcn-common</span>
<span class="t" style="left:112.10px;top:201.00px;font-size:13.5px;color:#dfe1e5;-webkit-text-stroke:0.36px;letter-spacing:0.510px;">txlcn-logger</span>
<span class="t" style="left:112.10px;top:225.00px;font-size:13.5px;color:#dfe1e5;-webkit-text-stroke:0.36px;letter-spacing:0.679px;">txlcn-tc</span>
<span class="t" style="left:112.10px;top:249.00px;font-size:13.5px;color:#dfe1e5;-webkit-text-stroke:0.36px;letter-spacing:0.619px;">txlcn-tm</span>
<span class="t" style="left:131.10px;top:273.00px;font-size:13.5px;color:#dfe1e5;letter-spacing:0.200px;">src</span>
<span class="t" style="left:150.10px;top:297.00px;font-size:13.5px;color:#dfe1e5;letter-spacing:-0.266px;">main</span>
<span class="t" style="left:169.10px;top:321.00px;font-size:13.5px;color:#dfe1e5;letter-spacing:0.194px;">build</span>
<span class="t" style="left:169.10px;top:345.00px;font-size:13.5px;color:#dfe1e5;letter-spacing:-0.191px;">java</span>
<span class="t" style="left:188.10px;top:369.00px;font-size:13.5px;color:#dfe1e5;letter-spacing:0.299px;">com.codingapi.txlcn.tm</span>
<span class="t" style="left:207.10px;top:393.00px;font-size:13.5px;color:#dfe1e5;letter-spacing:0.405px;">cluster</span>
<span class="t" style="left:207.10px;top:417.00px;font-size:13.5px;color:#dfe1e5;letter-spacing:0.428px;">config</span>
<span class="t" style="left:226.10px;top:441.00px;font-size:13.5px;color:#dfe1e5;letter-spacing:0.213px;">TxManagerConfig</span>
<span class="t" style="left:207.10px;top:465.00px;font-size:13.5px;color:#dfe1e5;letter-spacing:0.234px;">core</span>
<span class="t" style="left:207.10px;top:489.00px;font-size:13.5px;color:#dfe1e5;letter-spacing:0.424px;">support</span>
<span class="t" style="left:207.10px;top:513.00px;font-size:13.5px;color:#dfe1e5;letter-spacing:0.297px;">txmsg</span>
<span class="t" style="left:207.10px;top:537.00px;font-size:13.5px;color:#dfe1e5;letter-spacing:0.212px;">TMApplication</span>
<span class="t" style="left:207.10px;top:561.00px;font-size:13.5px;color:#dfe1e5;letter-spacing:0.354px;">TMAutoConfiguration</span>
<span class="t" style="left:169.10px;top:585.00px;font-size:13.5px;color:#dfe1e5;letter-spacing:0.335px;">resources</span>
<span class="t" style="left:188.10px;top:609.00px;font-size:13.5px;color:#dfe1e5;letter-spacing:0.181px;">static.admin</span>
<span class="t" style="left:188.10px;top:633.00px;font-size:13.5px;color:#dfe1e5;letter-spacing:0.316px;">application.properties</span>
<span class="t" style="left:188.10px;top:657.00px;font-size:13.5px;color:#dfe1e5;letter-spacing:0.377px;">application-second.properties</span>
<span class="t" style="left:188.10px;top:681.00px;font-size:13.5px;color:#dfe1e5;letter-spacing:0.397px;">application-third.properties</span>
<span class="t" style="left:188.10px;top:705.00px;font-size:13.5px;color:#dfe1e5;letter-spacing:0.380px;">application-ujued.properties</span>
<span class="t" style="left:188.10px;top:729.00px;font-size:13.5px;color:#dfe1e5;letter-spacing:0.361px;">tx-manager.sql</span>
<span class="t" style="left:150.10px;top:753.00px;font-size:13.5px;color:#dfe1e5;letter-spacing:0.609px;">test</span>
<span class="t" style="left:111.70px;top:776.00px;font-size:18px;color:#548af7;font-style:italic;">m</span>
<span class="t" style="left:131.10px;top:777.00px;font-size:13.5px;color:#dfe1e5;letter-spacing:0.112px;">pom.xml</span>
<span class="t" style="left:112.10px;top:801.00px;font-size:13.5px;color:#dfe1e5;-webkit-text-stroke:0.36px;letter-spacing:0.463px;">txlcn-tracing</span>
<span class="t" style="left:112.10px;top:825.00px;font-size:13.5px;color:#dfe1e5;-webkit-text-stroke:0.36px;letter-spacing:0.512px;">txlcn-txmsg</span>
<span class="t" style="left:112.10px;top:849.00px;font-size:13.5px;color:#dfe1e5;-webkit-text-stroke:0.36px;letter-spacing:0.645px;">txlcn-txmsg-netty</span>
<span class="t" style="left:112.10px;top:873.00px;font-size:13.5px;color:#dfe1e5;letter-spacing:0.091px;">lcn_checks.xml</span>
<span class="t" style="left:112.10px;top:897.00px;font-size:13.5px;color:#dfe1e5;letter-spacing:-0.797px;">LICENSE</span>
<span class="t" style="left:112.10px;top:921.00px;font-size:13.5px;color:#dfe1e5;letter-spacing:0.235px;">package.txmanager.bat</span>
<span class="t" style="left:92.70px;top:944.00px;font-size:18px;color:#548af7;font-style:italic;">m</span>
<span class="t" style="left:112.10px;top:945.00px;font-size:13.5px;color:#dfe1e5;letter-spacing:0.083px;">pom.xml</span>
<span class="t" style="left:92.40px;top:969.00px;font-size:11px;color:#548af7;font-weight:bold;">M</span>
<span class="t" style="left:112.10px;top:969.00px;font-size:13.5px;color:#dfe1e5;letter-spacing:-0.418px;">README.md</span>
<span class="t" style="left:112.10px;top:993.00px;font-size:13.5px;color:#dfe1e5;letter-spacing:0.316px;">run.txmanager.bat</span>
<span class="t" style="left:93.10px;top:1017.00px;font-size:13.5px;color:#dfe1e5;letter-spacing:0.120px;">External Libraries</span>
<span class="t" style="left:93.10px;top:1041.00px;font-size:13.5px;color:#dfe1e5;letter-spacing:0.180px;">Scratches and Consoles</span>
<span class="t" style="left:230.00px;top:129.00px;font-size:13.5px;color:#dfe1e5;-webkit-text-stroke:0.36px;letter-spacing:0.567px;">[tx-lcn]</span>
<span class="t" style="left:509.50px;top:90.00px;font-size:18px;color:#548af7;font-style:italic;">m</span>
<span class="t" style="left:530.00px;top:92.00px;font-size:13.5px;color:#ced0d6;letter-spacing:0.312px;">pom.xml (tx-lcn)</span>
<span class="t" style="left:695.00px;top:92.00px;font-size:13.5px;color:#ced0d6;letter-spacing:0.121px;">Strings.java</span>
<span class="t" style="left:830.00px;top:92.00px;font-size:13.5px;color:#ced0d6;letter-spacing:0.163px;">TMApplication.java</span>
<span class="t" style="left:1010.00px;top:92.00px;font-size:13.5px;color:#dfe1e5;letter-spacing:0.348px;">application.properties</span>
<span class="t" style="left:1209.00px;top:92.00px;font-size:13.5px;color:#ced0d6;letter-spacing:0.159px;">TxManagerConfig.java</span>
<span class="t" style="left:1411.00px;top:92.00px;font-size:13.5px;color:#cfcdc4;letter-spacing:0.236px;">ServerProperties.class</span>
<span class="t" style="left:1615.00px;top:92.00px;font-size:13.5px;color:#ced0d6;letter-spacing:0.155px;">TxClientConfig.java</span>
<span class="t" style="left:1798.00px;top:92.00px;font-size:13.5px;color:#ced0d6;letter-spacing:0.401px;">application-second.properties</span>
<span class="t" style="left:2049.00px;top:92.00px;font-size:13.5px;color:#ced0d6;letter-spacing:0.425px;">application-third.properties</span>
<span class="t" style="left:530.30px;top:133.00px;font-size:13.5px;color:#ced0d6;letter-spacing:0.387px;">application-ujued.properties</span>
<span class="t" style="left:2463.30px;top:167.00px;font-size:13.5px;color:#ced0d6;">6</span>
<span class="t" style="left:2531.00px;top:130.00px;font-size:23px;color:#ced0d6;font-style:italic;">m</span>
<span class="t" style="left:2174.00px;top:51.00px;font-size:13.5px;color:#dfe1e5;letter-spacing:0.112px;">TMApplication</span>
<span class="t" style="left:26.00px;top:1367.00px;font-size:13.5px;color:#a8adb5;letter-spacing:-0.066px;">tx-lcn-5.0.1.RELEASE</span>
<span class="t" style="left:194.00px;top:1367.00px;font-size:13.5px;color:#a8adb5;letter-spacing:0.531px;">txlcn-tm</span>
<span class="t" style="left:270.00px;top:1367.00px;font-size:13.5px;color:#a8adb5;letter-spacing:0.333px;">src</span>
<span class="t" style="left:313.50px;top:1367.00px;font-size:13.5px;color:#a8adb5;letter-spacing:-0.316px;">main</span>
<span class="t" style="left:366.00px;top:1367.00px;font-size:13.5px;color:#a8adb5;letter-spacing:0.358px;">resources</span>
<span class="t" style="left:473.00px;top:1367.00px;font-size:13.5px;color:#a8adb5;letter-spacing:0.325px;">application.properties</span>
<span class="t" style="left:2285.50px;top:1367.00px;font-size:13.5px;color:#a8adb5;letter-spacing:-0.059px;">18:34</span>
<span class="t" style="left:2335.00px;top:1367.00px;font-size:13.5px;color:#a8adb5;letter-spacing:-0.633px;">LF</span>
<span class="t" style="left:2366.00px;top:1367.00px;font-size:13.5px;color:#6f737a;letter-spacing:0.250px;">UTF-8</span>
<span class="t" style="left:2454.50px;top:1367.00px;font-size:13.5px;color:#a8adb5;letter-spacing:0.119px;">4 spaces</span>
</div></body></html>
